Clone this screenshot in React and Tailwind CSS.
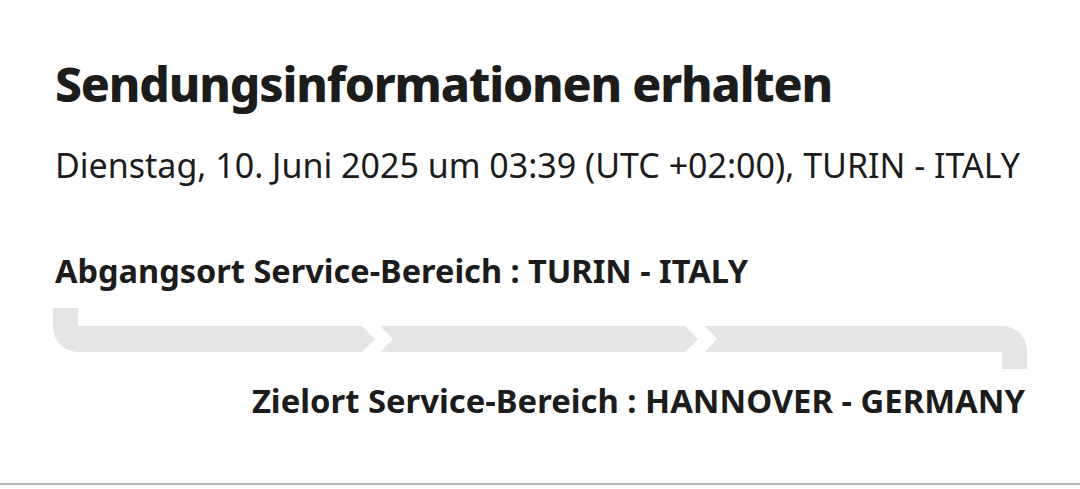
export default function App() {
  return (
    <div className="w-[1080px] h-[489px] bg-white flex flex-col text-[#1c1c1c]" style={{ fontFamily: '"Noto Sans", sans-serif' }}>
      <div className="pl-[55px] pr-[40px] flex flex-col">
        <h1 className="mt-[52px] text-[48px] leading-[64px] font-extrabold tracking-[-1.15px] whitespace-nowrap">Sendungsinformationen erhalten</h1>
        <p className="mt-[29px] text-[34px] leading-[40px] whitespace-nowrap">Dienstag, 10. Juni 2025 um 03:39 (UTC +02:00), TURIN - ITALY</p>
        <p className="mt-[68px] text-[32.5px] leading-[36px] font-bold whitespace-nowrap">Abgangsort Service-Bereich : TURIN - ITALY</p>
      </div>
      <svg className="block mt-[11px]" width="1080" height="70" viewBox="0 300 1080 70">
        <path d="M53 308 H78 V326 H362 L375 339 L362 352 H78 A25 25 0 0 1 53 327 Z" fill="#e5e5e5" />
        <path d="M380 326 H685 L698 339 L685 352 H380 L393 339 Z" fill="#e5e5e5" />
        <path d="M705 326 H1002 A25 25 0 0 1 1027 351 V369 H1002 V352 H705 L717 339 Z" fill="#e5e5e5" />
      </svg>
      <div className="flex justify-end pr-[55px] mt-[13px]">
        <p className="text-[32.8px] leading-[36px] font-bold whitespace-nowrap">Zielort Service-Bereich : HANNOVER - GERMANY</p>
      </div>
      <div className="flex-1" />
      <div className="h-[2px] bg-[#b3b3b3] mb-[4px]" />
    </div>
  );
}
